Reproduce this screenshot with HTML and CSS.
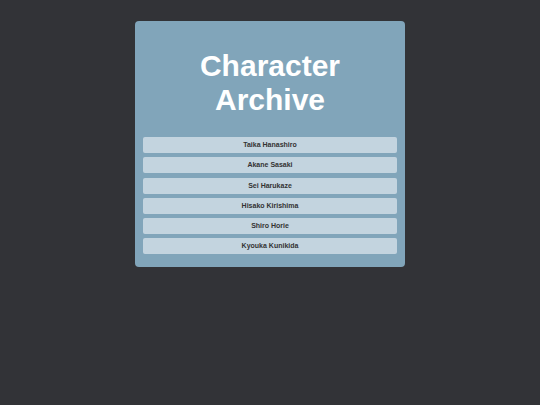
FILE: index.html
```html
<!DOCTYPE html>
<html>
<head>
<meta charset="utf-8">
<link rel="stylesheet" href="styles.css">
</head>
<body>
<div class="card">
  <h1 class="title">Character<br>Archive</h1>
  <ul class="list">
    <li class="item">Taika Hanashiro</li>
    <li class="item">Akane Sasaki</li>
    <li class="item">Sei Harukaze</li>
    <li class="item">Hisako Kirishima</li>
    <li class="item">Shiro Horie</li>
    <li class="item">Kyouka Kunikida</li>
  </ul>
</div>
</body>
</html>
```
FILE: styles.css
```css
html, body {
  margin: 0;
  padding: 0;
  background: #323337;
  font-family: "Liberation Sans", Arial, sans-serif;
}
body {
  display: flex;
  justify-content: center;
  padding-top: 21px;
}
.card {
  width: 270px;
  box-sizing: border-box;
  background: #81a5ba;
  border-radius: 4px;
  padding: 28px 8px 13px;
}
.title {
  margin: 0 0 20px;
  color: #ffffff;
  font-size: 30px;
  line-height: 34px;
  font-weight: bold;
  text-align: center;
}
.list {
  list-style: none;
  margin: 0;
  padding: 0;
  display: flex;
  flex-direction: column;
  gap: 4.3px;
}
.item {
  height: 16px;
  line-height: 16px;
  background: #c3d4df;
  border-radius: 2px;
  text-align: center;
  font-size: 7px;
  font-weight: bold;
  color: #333333;
}
```
